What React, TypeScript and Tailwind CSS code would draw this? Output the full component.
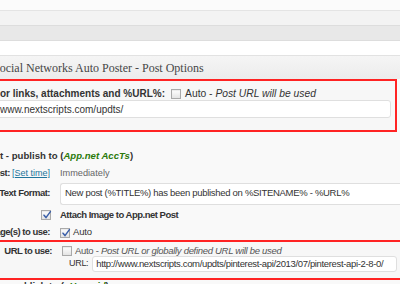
import React from "react";

const sans = "font-['Liberation_Sans',Arial,sans-serif]";

function Checkbox({ checked = false }: { checked?: boolean }) {
  return (
    <span className="relative inline-block h-[10px] w-[10px] shrink-0 border border-[#a9a9a9] bg-gradient-to-b from-[#ffffff] to-[#e4e4e4] shadow-[inset_0_1px_1px_rgba(0,0,0,0.08)]">
      {checked && (
        <svg viewBox="0 0 10 10" className="absolute left-[0px] top-[-1px] h-[10px] w-[10px]">
          <path d="M2 5.2 L4 7.6 L8.4 1.6" fill="none" stroke="#3a5fa8" strokeWidth="1.5" strokeLinecap="round" />
        </svg>
      )}
    </span>
  );
}

function Row({
  label,
  children,
  className = "",
}: {
  label: React.ReactNode;
  children?: React.ReactNode;
  className?: string;
}) {
  return (
    <div className={`flex items-center ${className}`}>
      <div className="-ml-[80px] w-[130px] shrink-0 whitespace-nowrap text-right text-[9.5px] font-bold tracking-[-0.5px] text-[#333]">
        {label}
      </div>
      <div className="ml-[10px] flex min-w-0 flex-1 items-center gap-[3px] whitespace-nowrap">
        {children}
      </div>
    </div>
  );
}

export default function App() {
  return (
    <div className={`h-[284px] w-[400px] overflow-hidden bg-[#f9f9f9] ${sans}`}>
      {/* admin chrome strips */}
      <div className="h-[11px] border-b border-[#e4e4e4] bg-[#fbfbfb]" />
      <div className="h-[15px] border-b border-[#dddddd] bg-[#f3f3f3]" />
      <div className="h-[15px] border-b border-[#dddddd] bg-[#e8e8e8]" />
      <div className="h-[15px] border-b border-[#e2e2e2] bg-white" />

      {/* meta box title */}
      <div className="flex h-[23px] items-center bg-gradient-to-b from-[#f5f5f5] to-[#ececec]">
        <h3 className="-ml-[7px] whitespace-nowrap font-['Liberation_Serif','Times_New_Roman',serif] text-[12px] text-[#464646]">
          Social Networks Auto Poster - Post Options
        </h3>
      </div>

      {/* highlighted URL box */}
      <div className="-ml-[10px] mr-[3px] h-[53px] border-2 border-[#ff2323] bg-[#f7f7f7] pl-[8px] pr-[4px]">
        <div className="mt-[6px] flex h-[13px] items-center gap-[6px] whitespace-nowrap text-[10px] text-[#333]">
          <span className="font-bold">or links, attachments and %URL%:</span>
          <Checkbox />
          <span className="-ml-[2px] text-[10.3px]">
            Auto - <i>Post URL will be used</i>
          </span>
        </div>
        <div className="-ml-[6px] flex h-[18px] items-center rounded-[3px] border border-[#dfdfdf] bg-white pl-[5px] text-[10px] text-[#333]">
          www.nextscripts.com/updts/
        </div>
      </div>

      <div className="mt-[16px] flex h-[16px] items-center whitespace-nowrap text-[9.6px] font-bold text-[#333]">
        <span>
          t - publish to (<i className="text-[#2b7a0b]">App.net AccTs</i>)
        </span>
      </div>

      <Row
        label={
          <>
            When to post:{" "}
            <span className="text-[9px] font-normal tracking-normal text-[#21759b] underline">[Set time]</span>
          </>
        }
        className="mt-[1px] h-[17px]"
      >
        <span className="text-[9.2px] text-[#666]">Immediately</span>
      </Row>

      <Row label="Message Text Format:" className="h-[23px]">
        <div className="flex h-[22px] flex-1 items-center rounded-l-[3px] border border-r-0 border-[#dfdfdf] bg-white pl-[4px] text-[9.5px] tracking-[-0.3px] text-[#333]">
          New post (%TITLE%) has been published on %SITENAME% - %URL%
        </div>
      </Row>

      <div className="mt-[1px] flex h-[18px] items-center">
        <div className="ml-[41px] flex items-center">
          <Checkbox checked />
        </div>
        <span className="ml-[9px] whitespace-nowrap text-[9.5px] font-bold tracking-[-0.5px] text-[#333]">
          Attach Image to App.net Post
        </span>
      </div>

      <Row label="Image(s) to use:" className="mt-[1px] h-[15px]">
        <Checkbox checked />
        <span className="text-[9.5px] tracking-[-0.2px] text-[#333]">Auto</span>
      </Row>

      {/* highlighted URL-to-use box */}
      <div className="-ml-[10px] -mr-[10px] h-[40px] border-2 border-[#ff2323] bg-[#f7f7f7] pl-[10px] pr-[10px]">
        <Row label="URL to use:" className="mt-[4px] h-[10px]">
          <Checkbox />
          <span className="text-[9.5px] tracking-[-0.3px] text-[#555]">
            Auto - <i>Post URL or globally defined URL will be used</i>
          </span>
        </Row>
        <div className="flex h-[16px] items-center">
          <span className="ml-[67px] text-[9px] tracking-[-0.3px] text-[#333]">URL:</span>
          <div className="ml-[4px] mr-[1px] flex h-[16px] flex-1 items-center overflow-hidden whitespace-nowrap rounded-[3px] border border-[#dfdfdf] bg-white pl-[3px] text-[9.5px] tracking-[-0.35px] text-[#333]">
            http://www.nextscripts.com/updts/pinterest-api/2013/07/pinterest-api-2-8-0/
          </div>
        </div>
      </div>

      <div className="flex h-[12px] items-center whitespace-nowrap text-[9.6px] font-bold text-[#333]">
        <span>
          r - publish to (<i className="text-[#2b7a0b]">xHrenoid</i>)
        </span>
      </div>
    </div>
  );
}
